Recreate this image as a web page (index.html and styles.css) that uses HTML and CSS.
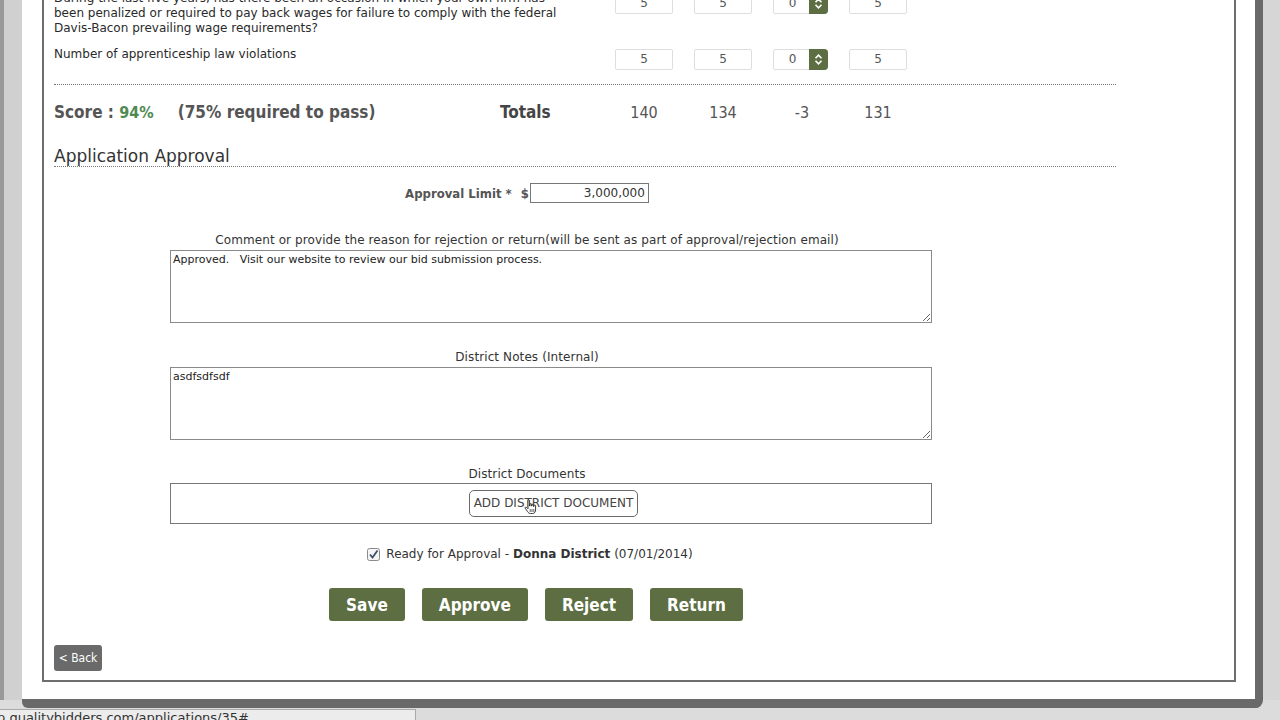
FILE: index.html
```html
<!DOCTYPE html>
<html lang="en">
<head>
<meta charset="utf-8">
<title>Application Approval</title>
<link rel="stylesheet" href="styles.css">
</head>
<body>
<div class="page">
  <div class="frame">
    <div class="inner">
      <div class="questions">
        <div class="qrow">
          <div class="qtext">During the last five years, has there been an occasion in which your own firm has<br>been penalized or required to pay back wages for failure to comply with the federal Davis-Bacon prevailing wage requirements?</div>
          <div class="cell"><div class="num">5</div></div>
          <div class="cell"><div class="num">5</div></div>
          <div class="cell"><div class="num spin"><span class="val">0</span><span class="spinner"><svg width="9" height="13" viewBox="0 0 9 13"><path d="M1.5 5.2 L4.5 2.2 L7.5 5.2 M1.5 7.8 L4.5 10.8 L7.5 7.8" fill="none" stroke="#fff" stroke-width="1.6"/></svg></span></div></div>
          <div class="cell"><div class="num">5</div></div>
        </div>
        <div class="qrow">
          <div class="qtext">Number of apprenticeship law violations</div>
          <div class="cell"><div class="num">5</div></div>
          <div class="cell"><div class="num">5</div></div>
          <div class="cell"><div class="num spin"><span class="val">0</span><span class="spinner"><svg width="9" height="13" viewBox="0 0 9 13"><path d="M1.5 5.2 L4.5 2.2 L7.5 5.2 M1.5 7.8 L4.5 10.8 L7.5 7.8" fill="none" stroke="#fff" stroke-width="1.6"/></svg></span></div></div>
          <div class="cell"><div class="num">5</div></div>
        </div>
      </div>

      <div class="score-row">
        <div class="score">Score : <span class="pct">94%</span><span class="req">(75% required to pass)</span></div>
        <div class="totals">Totals</div>
        <div class="cell"><span class="tot">140</span></div>
        <div class="cell"><span class="tot">134</span></div>
        <div class="cell"><span class="tot">-3</span></div>
        <div class="cell"><span class="tot">131</span></div>
      </div>

      <h2 class="section-title">Application Approval</h2>

      <div class="form">
        <div class="limit-row">
          <span class="limit-label">Approval Limit *</span>
          <span class="limit-label dollar">$</span>
          <span class="limit-input">3,000,000</span>
        </div>

        <div class="field-label first">Comment or provide the reason for rejection or return(will be sent as part of approval/rejection email)</div>
        <textarea class="area">Approved.   Visit our website to review our bid submission process.</textarea>

        <div class="field-label">District Notes (Internal)</div>
        <textarea class="area">asdfsdfsdf</textarea>

        <div class="field-label docs-label">District Documents</div>
        <div class="docs-box">
          <span class="add-doc">ADD DISTRICT DOCUMENT
            <svg class="cursor" width="14" height="16" viewBox="0 0 14 16"><path d="M4 1.5 C4 0.7 5.6 0.7 5.6 1.5 L5.6 7 L6 7 L6 5.2 C6 4.4 7.6 4.4 7.6 5.2 L7.6 7 L8 7 L8 5.8 C8 5 9.6 5 9.6 5.8 L9.6 7.4 L10 7.4 L10 6.6 C10 5.8 11.6 5.8 11.6 6.6 L11.6 11 C11.6 13 10.4 14.5 8.6 14.5 L6.4 14.5 C5 14.5 4.2 13.6 3.4 12.4 L1.2 9.2 C0.7 8.4 1.8 7.6 2.5 8.3 L4 9.8 Z" fill="#fff" stroke="#222" stroke-width="0.9"/><path d="M6.2 10 V13 M8 10 V13 M9.8 10 V13" stroke="#222" stroke-width="0.7"/></svg>
          </span>
        </div>

        <div class="ready-row">
          <svg class="check" width="13" height="13" viewBox="0 0 13 13"><rect x="0.5" y="0.5" width="12" height="12" rx="2" fill="#f4f4f4" stroke="#8a8a8a"/><path d="M3 6.5 L5.5 9.5 L10.5 2.5" fill="none" stroke="#3d4e6a" stroke-width="1.8"/></svg>
          <span>Ready for Approval - <b>Donna District</b> (07/01/2014)</span>
        </div>

        <div class="actions">
          <button class="btn">Save</button>
          <button class="btn">Approve</button>
          <button class="btn">Reject</button>
          <button class="btn">Return</button>
        </div>
      </div>

      <button class="back">&lt; Back</button>
    </div>
  </div>
  <div class="statusbar">p.qualitybidders.com/applications/35#</div>
</div>
</body>
</html>
```

FILE: styles.css
```css
html, body {
  margin: 0;
  padding: 0;
  height: 720px;
  overflow: hidden;
}
body {
  font-family: "DejaVu Sans", sans-serif;
  color: #333;
  background: #dcdcdc;
}
.page {
  height: 720px;
  box-sizing: border-box;
  border-left: 4px solid #999;
  padding-left: 18px;
  background: linear-gradient(to right, #d0d0d0, #e2e2e2 30%, #e2e2e2 70%, #d6d6d6);
}
.frame {
  width: 1241px;
  margin-top: -20px;
  background: #fff;
  border-right: 8px solid #696969;
  border-bottom: 9px solid #696969;
  border-bottom-right-radius: 8px;
  border-bottom-left-radius: 6px;
  padding: 0 19px 17px 20px;
  box-sizing: border-box;
}
.inner {
  border: 2px solid #6e6e6e;
  padding: 9px 10px 9px 10px;
}

/* question rows */
.questions {
  display: flex;
  flex-direction: column;
  gap: 11px;
  width: 1062px;
  padding-bottom: 14px;
  border-bottom: 1px dotted #777;
}
.qrow {
  display: grid;
  grid-template-columns: 561px 79px 79px 76px 78px;
  align-items: start;
}
.qtext {
  font-size: 12px;
  line-height: 15px;
  color: #2a2a2a;
  max-width: 540px;
}
.num {
  margin-top: 2px;
  width: 58px;
  height: 21px;
  box-sizing: border-box;
  border: 1px solid #dedede;
  border-radius: 2px;
  font-size: 12px;
  line-height: 19px;
  text-align: center;
  color: #555;
}
.num.spin {
  width: 55px;
  display: flex;
  text-align: left;
}
.num.spin .val {
  flex: 1;
  text-align: center;
  padding-left: 2px;
}
.spinner {
  width: 19px;
  height: 21px;
  margin: -1px -1px 0 0;
  background: #5d6e42;
  border-radius: 0 4px 4px 0;
  display: flex;
  align-items: center;
  justify-content: center;
}

/* score */
.score-row {
  display: grid;
  grid-template-columns: 446px 115px 79px 79px 76px 78px;
  align-items: center;
  margin-top: 15px;
  height: 24px;
  width: 1062px;
  font-family: "DejaVu Sans Condensed", "DejaVu Sans", sans-serif;
  font-stretch: condensed;
}
.score {
  font-size: 17px;
  font-weight: bold;
  color: #555;
  white-space: nowrap;
}
.score .pct {
  color: #4f8a52;
  font-weight: 600;
  font-size: 16px;
}
.score .req {
  margin-left: 24px;
}
.totals {
  font-size: 17px;
  font-weight: 600;
  color: #444;
}
.tot {
  display: block;
  width: 58px;
  text-align: center;
  font-size: 16px;
  color: #555;
}

.section-title {
  margin: 22px 0 0 0;
  width: 1062px;
  font-size: 17px;
  font-weight: normal;
  line-height: 20px;
  color: #333;
  border-bottom: 1px dotted #777;
}

/* form */
.form {
  width: 946px;
  display: flex;
  flex-direction: column;
  align-items: center;
}
.limit-row {
  margin-top: 16px;
  display: flex;
  align-items: center;
}
.limit-label {
  font-family: "DejaVu Sans Condensed", "DejaVu Sans", sans-serif;
  font-stretch: condensed;
  font-size: 13px;
  font-weight: 600;
  color: #555;
}
.limit-label.dollar {
  margin: 0 1px 0 9px;
}
.limit-input {
  width: 119px;
  height: 20px;
  box-sizing: border-box;
  border: 1px solid #777;
  font-size: 12px;
  line-height: 18px;
  text-align: right;
  padding-right: 3px;
  color: #333;
}
.field-label {
  margin-top: 27px;
  font-size: 12px;
  line-height: 15px;
  color: #333;
  letter-spacing: 0.1px;
}
.field-label.first {
  margin-top: 30px;
}
.area {
  display: block;
  align-self: flex-start;
  margin: 2px 0 0 116px;
  width: 762px;
  height: 73px;
  box-sizing: border-box;
  border: 1px solid #8a8a8a;
  padding: 2px 2px;
  font-family: "DejaVu Sans", sans-serif;
  font-size: 11px;
  line-height: 14px;
  color: #222;
  white-space: pre-wrap;
}
.docs-label {
  margin-top: 27px;
}
.docs-box {
  align-self: flex-start;
  margin: 1px 0 0 116px;
  width: 762px;
  height: 41px;
  box-sizing: border-box;
  border: 1px solid #777;
  display: flex;
  align-items: center;
  padding-left: 298px;
}
.add-doc {
  position: relative;
  width: 169px;
  height: 27px;
  box-sizing: border-box;
  border: 1px solid #6a6a6a;
  border-radius: 5px;
  font-size: 12px;
  line-height: 25px;
  text-align: center;
  color: #444;
}
.cursor {
  position: absolute;
  left: 54px;
  top: 8px;
}
.ready-row {
  margin-top: 23px;
  display: flex;
  align-items: center;
  gap: 6px;
  font-size: 12px;
  line-height: 15px;
  color: #333;
  margin-left: 6px;
}
.ready-row b {
  font-weight: 600;
}
.actions {
  margin-top: 26px;
  display: flex;
  gap: 17px;
  margin-left: 18px;
}
.btn {
  height: 33px;
  padding: 0 17px;
  border: none;
  border-radius: 3px;
  background: #5d6e42;
  color: #fff;
  font-family: "DejaVu Sans Condensed", "DejaVu Sans", sans-serif;
  font-stretch: condensed;
  font-size: 17px;
  font-weight: bold;
}
.back {
  display: block;
  margin-top: 24px;
  height: 26px;
  width: 48px;
  padding: 0;
  border: none;
  border-radius: 3px;
  background: #6a6a6a;
  color: #fff;
  font-family: "DejaVu Sans Condensed", "DejaVu Sans", sans-serif;
  font-stretch: condensed;
  font-size: 12px;
}
.statusbar {
  position: fixed;
  left: 0;
  bottom: 0;
  width: 416px;
  height: 11px;
  box-sizing: border-box;
  background: #ececec;
  border-top: 1px solid #aaa;
  border-right: 1px solid #aaa;
  font-size: 13px;
  line-height: 16px;
  color: #333;
  overflow: hidden;
  white-space: nowrap;
  text-indent: -3px;
}
```
